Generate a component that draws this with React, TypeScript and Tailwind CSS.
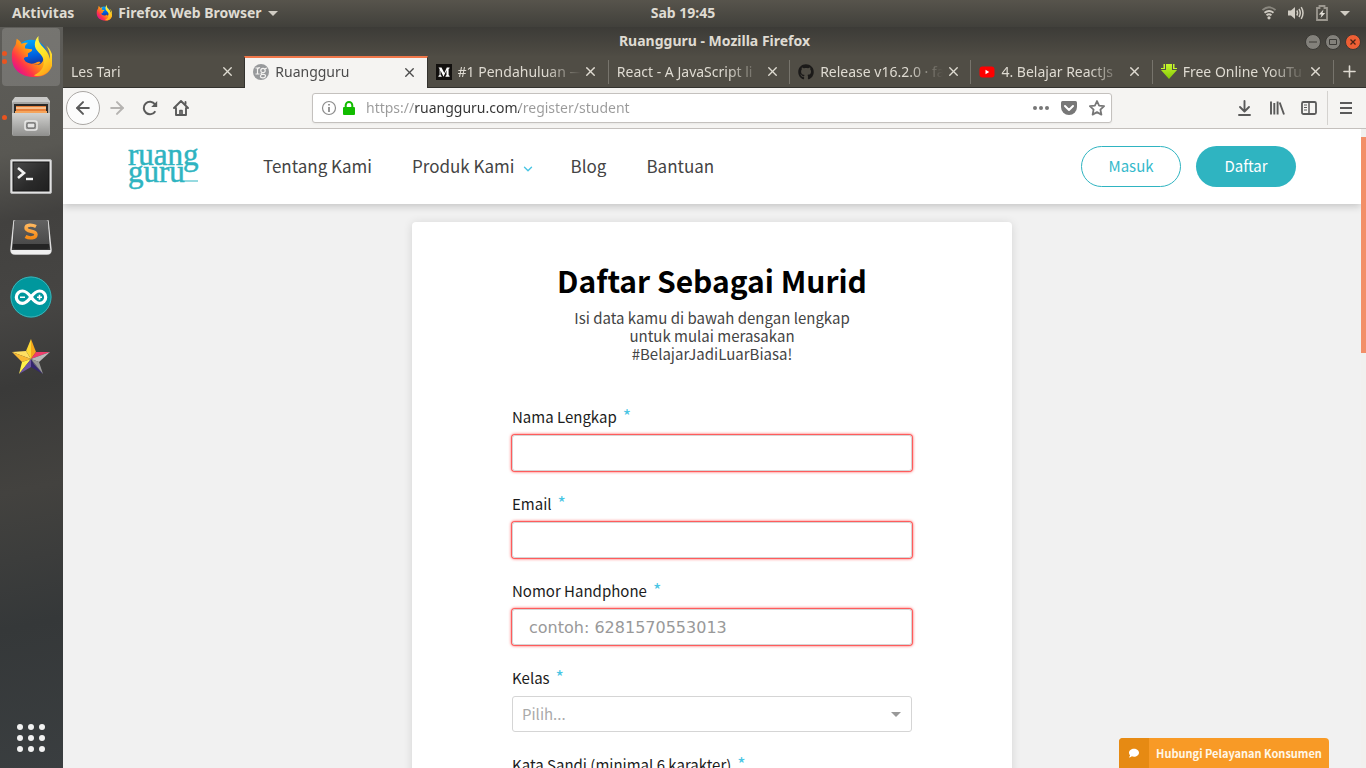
import type { ReactNode } from 'react';
import { ArrowLeft, ArrowRight, ChevronDown, Plus, X } from 'lucide-react';
import { FaComment, FaGithub } from 'react-icons/fa';

const SHELL = "font-['Noto_Sans',sans-serif]";
const SITE = "font-['Noto_Sans_CJK_SC',sans-serif]";

function FirefoxIcon({ id, className }: { id: string; className: string }) {
  return (
    <svg viewBox="0 0 44 44" className={className} aria-hidden="true">
      <defs>
        <linearGradient id={`${id}-body`} x1="0.9" y1="0.1" x2="0.1" y2="0.8">
          <stop offset="0" stopColor="#fff23a" />
          <stop offset="0.3" stopColor="#ffc21a" />
          <stop offset="0.55" stopColor="#ff8a16" />
          <stop offset="0.8" stopColor="#ff3647" />
          <stop offset="1" stopColor="#e31587" />
        </linearGradient>
        <linearGradient id={`${id}-globe`} x1="0.4" y1="0" x2="0.6" y2="1">
          <stop offset="0" stopColor="#00a8fc" />
          <stop offset="0.5" stopColor="#0060df" />
          <stop offset="1" stopColor="#2b1264" />
        </linearGradient>
        <linearGradient id={`${id}-flame`} x1="0.3" y1="0" x2="0.6" y2="1">
          <stop offset="0" stopColor="#fff84a" />
          <stop offset="0.5" stopColor="#ffe226" />
          <stop offset="1" stopColor="#ffa41a" />
        </linearGradient>
      </defs>
      <circle cx="22" cy="21" r="17" fill={`url(#${id}-globe)`} />
      <path
        d="M6 6c2 1 4 3 5 5 2-1 5-1 7-1-3 2-4 4-3 6l7 1c1 2-2 3-4 4-1 1 1 3-1 4-3 0-4 1-3 3 2 4 8 5 12 3 3-2 5-1 5 0-2 2-4 2-7 2 9 2 13-7 8-14 7 1 9 8 7 13 4-7 1-14-2-19 5 4 7 11 7 15 0 12-9 18-18 18C8 46 0 36 1 23 1 17 4 14 5 12z"
        transform="translate(1 -3)"
        fill={`url(#${id}-body)`}
      />
      <path
        d="M30 0c-1 5 1 8 5 12 7 7 10 18 5 25-4 5-11 6-15 4 8-3 13-11 9-19-3-5-8-7-8-13 0-4 2-7 4-9z"
        fill={`url(#${id}-flame)`}
      />
    </svg>
  );
}

function FilesIcon() {
  return (
    <svg viewBox="0 0 40 42" className="h-[42px] w-10" aria-hidden="true">
      <defs>
        <linearGradient id="files-front" x1="0" y1="0" x2="0" y2="1">
          <stop offset="0" stopColor="#d2d2d0" />
          <stop offset="1" stopColor="#8f8f8d" />
        </linearGradient>
      </defs>
      <path d="M4 1h32l3 4v10H1V5z" fill="#c9c9c7" />
      <rect x="1" y="6" width="38" height="34" rx="2" fill="#a5a5a3" />
      <rect x="3" y="8" width="34" height="10" fill="#2b2927" />
      <rect x="5" y="10" width="30" height="6" fill="#e8803a" />
      <path d="M5 12h30" stroke="#f9d4ab" strokeWidth="1.5" />
      <path d="M4 15h32v2H4z" fill="#f5a55c" />
      <path d="M1 17h38l-1 23H2z" fill="url(#files-front)" />
      <rect x="14" y="25" width="12" height="9" rx="2" fill="none" stroke="#e9e9e8" strokeWidth="1.5" />
      <rect x="16" y="27" width="8" height="5" rx="1" fill="#e5e5e4" stroke="#555" />
    </svg>
  );
}

function TerminalIcon() {
  return (
    <svg viewBox="0 0 42 36" className="h-9 w-[42px]" aria-hidden="true">
      <defs>
        <linearGradient id="term-screen" x1="0" y1="0" x2="1" y2="1">
          <stop offset="0" stopColor="#4a4a4a" />
          <stop offset="0.6" stopColor="#2a2a2a" />
          <stop offset="1" stopColor="#202020" />
        </linearGradient>
      </defs>
      <rect x="0.5" y="0.5" width="41" height="34" rx="1.5" fill="#e2e2e2" stroke="#b4b4b4" />
      <rect x="3" y="3" width="36" height="29" fill="url(#term-screen)" stroke="#161616" />
      <path d="m8 9 6 5-6 5" fill="none" stroke="#f2f2f2" strokeWidth="2.6" />
      <path d="M16 20h7" stroke="#f2f2f2" strokeWidth="2.4" />
    </svg>
  );
}

function SublimeIcon() {
  return (
    <svg viewBox="0 0 42 38" className="h-[38px] w-[42px]" aria-hidden="true">
      <defs>
        <linearGradient id="sub-key" x1="0" y1="0" x2="0" y2="1">
          <stop offset="0" stopColor="#626262" />
          <stop offset="1" stopColor="#484848" />
        </linearGradient>
        <linearGradient id="sub-s" x1="0" y1="0" x2="0" y2="1">
          <stop offset="0" stopColor="#ffb65c" />
          <stop offset="1" stopColor="#f58a15" />
        </linearGradient>
      </defs>
      <path d="M4 3h34l3 29q0 4-4 4H5q-4 0-4-4z" fill="#3a3a3a" stroke="#dedede" strokeWidth="1.5" />
      <path d="M1 32h40q0 4-4 4H5q-4 0-4-4z" fill="#f0f0f0" />
      <path d="M6 2h30q2 0 2 2l1 22q0 2-2 2H5q-2 0-2-2L4 4q0-2 2-2z" fill="url(#sub-key)" />
      <path d="M3 26h36v3q0 2-2 2H5q-2 0-2-2z" fill="#242424" />
      <path
        d="M26 8.500c-4-2-10-2-10 1.500 0 4.500 10 2 10 6.500 0 4-7 4-10.500 2"
        fill="none"
        stroke="url(#sub-s)"
        strokeWidth="3.4"
      />
    </svg>
  );
}

function ArduinoIcon() {
  return (
    <svg viewBox="0 0 42 42" className="size-[42px]" aria-hidden="true">
      <circle cx="21" cy="21" r="20.5" fill="#00979d" />
      <circle cx="21" cy="21" r="20" fill="none" stroke="#3fb0b4" />
      <path
        d="M21 21c-3-4-5-6-8.500-6a6.200 6.200 0 0 0 0 12.400c3.500 0 5.500-2.400 8.500-6.400s5-6 8.500-6a6.200 6.200 0 0 1 0 12.400c-3.500 0-5.500-2.400-8.500-6.400z"
        fill="none"
        stroke="#fff"
        strokeWidth="3.2"
      />
      <path d="M10 21.200h5M27 21.200h5M29.500 18.700v5" stroke="#fff" strokeWidth="1.600" />
    </svg>
  );
}

function StarUmlIcon() {
  return (
    <svg viewBox="0 0 38 36" className="h-9 w-[38px]" aria-hidden="true">
      <path d="M19 0v20l-5-8z" fill="#fdd835" />
      <path d="M19 0l5 13-5 7z" fill="#f5a81c" />
      <path d="M0 13l14-1 5 8z" fill="#ffe063" />
      <path d="M0 13l19 7-9 3z" fill="#f9b934" />
      <path d="M38 13l-14 0-5 7z" fill="#ef3d6b" />
      <path d="M38 13L19 20l8 3z" fill="#b9b9b9" />
      <path d="M7 35l3-12 9-3z" fill="#fff04a" />
      <path d="M7 35l12-15v8z" fill="#6d53a3" />
      <path d="M31 35L19 20v8z" fill="#34276e" />
      <path d="M31 35l-4-12-8-3z" fill="#9a9a9a" />
      <path d="M31 35L19 20l3 5z" fill="#777" />
    </svg>
  );
}

function AppsIcon() {
  return (
    <svg viewBox="0 0 28 28" className="size-7" fill="#f2f2f2" aria-hidden="true">
      {[3, 14, 25].map((y) => [3, 14, 25].map((x) => <circle key={`${x}-${y}`} cx={x} cy={y} r="3" />))}
    </svg>
  );
}

function SystemBar() {
  return (
    <header className="grid h-[27px] shrink-0 grid-cols-[1fr_auto_1fr] items-center bg-gradient-to-b from-[#57544c] to-[#41403b] px-3 pb-px text-sm font-bold text-[#dfdbd2]">
      <div className="flex items-center gap-[22px]">
        <button type="button">Aktivitas</button>
        <button type="button" className="flex items-center gap-1.5">
          <FirefoxIcon id="fx-small" className="size-4" />
          Firefox Web Browser
          <svg viewBox="0 0 10 5" className="h-[5px] w-2.5" fill="#d0ccc3" aria-hidden="true">
            <path d="M0 0h10L5 5z" />
          </svg>
        </button>
      </div>
      <time>Sab 19:45</time>
      <div className="flex items-center justify-end gap-3 pr-1">
        <svg viewBox="0 0 14 14" className="size-3.5" fill="none" stroke="#d0ccc3" strokeWidth="1.800" aria-hidden="true">
          <path d="M.5 4Q7-1.500 13.500 4" stroke="#8a877f" />
          <path d="M2.500 6.700q4.500-3.500 9 0M4.500 9.300q2.500-2 5 0" />
          <circle cx="7" cy="11.800" r="1.600" fill="#d0ccc3" stroke="none" />
        </svg>
        <svg viewBox="0 0 16 14" className="h-3.5 w-4" fill="none" stroke="#d0ccc3" strokeWidth="1.500" aria-hidden="true">
          <path d="M0 4.500h3L7 1v12L3 9.500H0z" fill="#d0ccc3" stroke="none" />
          <path d="M8.800 4.500q1.500 2.500 0 5M11 3q2.500 4 0 8M13.200 1.200q3.600 5.800 0 11.600" />
        </svg>
        <svg viewBox="0 0 12 16" className="h-4 w-3" aria-hidden="true">
          <path d="M1 3h2.500V1h5v2H11v12H1z" fill="none" stroke="#9b978f" strokeWidth="1.800" />
          <path d="M7.500 4.500 2.800 9.500h2.700L4.500 13l4.700-5H6.500z" fill="#e3e0d8" />
        </svg>
        <svg viewBox="0 0 10 5" className="h-[5px] w-2.5" fill="#d0ccc3" aria-hidden="true">
          <path d="M0 0h10L5 5z" />
        </svg>
      </div>
    </header>
  );
}

function DockItem({ label, dots = 0, active = false, children }: { label: string; dots?: number; active?: boolean; children: ReactNode }) {
  return (
    <li className="relative flex h-[58px] w-full items-center justify-center">
      <button
        type="button"
        aria-label={label}
        className={active ? 'flex h-[58px] w-[58px] items-center justify-center rounded bg-white/15' : 'flex h-[58px] w-[58px] items-center justify-center'}
      >
        {children}
      </button>
      <span className="absolute left-0.5 flex flex-col gap-[3px]">
        {Array.from({ length: dots }, (_, i) => (
          <i key={i} className="size-[5px] rounded-full bg-[#e95420]" />
        ))}
      </span>
    </li>
  );
}

function Dock() {
  return (
    <nav
      aria-label="Dock"
      className="flex w-[63px] shrink-0 flex-col justify-between bg-[linear-gradient(168deg,#5e5d59_0%,#595853_17%,#42413f_26%,#464543_38%,#3a3a39_48%,#43423f_62%,#353839_80%,#3a3e40_100%)] pt-px pr-px pb-[2px]"
    >
      <ul className="flex flex-col gap-0.5">
        <DockItem label="Firefox" dots={2} active>
          <FirefoxIcon id="fx-dock" className="size-[42px]" />
        </DockItem>
        <DockItem label="Files" dots={1}>
          <FilesIcon />
        </DockItem>
        <DockItem label="Terminal">
          <TerminalIcon />
        </DockItem>
        <DockItem label="Sublime Text">
          <SublimeIcon />
        </DockItem>
        <DockItem label="Arduino">
          <ArduinoIcon />
        </DockItem>
        <DockItem label="StarUML">
          <StarUmlIcon />
        </DockItem>
      </ul>
      <button type="button" aria-label="Show applications" className="flex h-14 items-center justify-center">
        <AppsIcon />
      </button>
    </nav>
  );
}

function TitleBar() {
  return (
    <div className="grid h-[29px] shrink-0 grid-cols-[1fr_auto_1fr] items-center bg-gradient-to-b from-[#3c3b37] to-[#4f4c44] px-[5px] text-sm font-bold text-[#dfdbd2]">
      <span />
      <h1 className="pb-0.5">Ruangguru - Mozilla Firefox</h1>
      <div className="flex justify-end gap-1">
        <button type="button" aria-label="Minimize" className="flex size-4 items-center justify-center rounded-full border border-[#3a3935] bg-[#83817b]">
          <svg viewBox="0 0 8 8" className="size-2" stroke="#3c3b37" aria-hidden="true"><path d="M0 4h8" /></svg>
        </button>
        <button type="button" aria-label="Maximize" className="flex size-4 items-center justify-center rounded-full border border-[#3a3935] bg-[#83817b]">
          <svg viewBox="0 0 8 8" className="size-2" fill="none" stroke="#3c3b37" aria-hidden="true"><path d="M.5 1.500h7v5h-7z" /></svg>
        </button>
        <button type="button" aria-label="Close" className="flex size-4 items-center justify-center rounded-full border border-[#3a3935] bg-[#ee5f34]">
          <svg viewBox="0 0 8 8" className="size-2" stroke="#4a2416" strokeWidth="1.300" aria-hidden="true"><path d="m1.500 1.500 5 5m0-5-5 5" /></svg>
        </button>
      </div>
    </div>
  );
}

function RuangguruFavicon() {
  return (
    <svg viewBox="0 0 16 16" className="size-4 shrink-0" aria-hidden="true">
      <circle cx="8" cy="8" r="8" fill="#97999b" />
      <g fill="none" stroke="#f4f3f1" strokeWidth="1.200">
        <path d="M2.500 4h2v6M2.500 10h4M4.500 5.500Q5.500 3 7 4" />
        <circle cx="10" cy="6.500" r="2.200" />
        <path d="M12 4.800l2-.8M8.500 8.800c-1 1 0 1.500 2 1.500 3 0 2.500 3.500-.5 3.500-3.500 0-3-2.500-1-3.500" />
      </g>
    </svg>
  );
}

function MediumIcon() {
  return (
    <svg viewBox="0 0 16 16" className="size-4 shrink-0" aria-hidden="true">
      <path d="M0 0h16v16H0z" fill="#12100e" />
      <path d="M2.500 3.500h3L8.300 9l2.500-5.500h2.800v.8l-1 .8v6l1 .8v.9H9.500v-.9l1-.8V6.300l-3 6.400L4.500 6.500v4.600l1.200.9v.8H2.400V12l1.200-.9V5z" fill="#fff" />
    </svg>
  );
}

function YoutubeIcon() {
  return (
    <svg viewBox="0 0 16 16" className="size-4 shrink-0" aria-hidden="true">
      <rect x="0.500" y="2.500" width="15" height="11" rx="3" fill="#f00" />
      <path d="M6.500 5.800v4.400L10.200 8z" fill="#fff" />
    </svg>
  );
}

function DownloadFavicon() {
  return (
    <svg viewBox="0 0 16 16" className="size-4 shrink-0" aria-hidden="true">
      <defs>
        <linearGradient id="dl" x1="0" y1="0" x2="0" y2="1">
          <stop offset="0" stopColor="#c6f52c" />
          <stop offset="1" stopColor="#83c807" />
        </linearGradient>
      </defs>
      <path d="M5 0h6v6h5l-8 9L0 6h5z" fill="url(#dl)" />
      <path d="M2.500 0h1.500v5H0V4h2.500zM13.500 0H12v5h4V4h-2.500z" fill="#c6f52c" />
    </svg>
  );
}

type TabData = { title: string; icon?: ReactNode; active?: boolean; divider?: boolean };

const TABS: TabData[] = [
  { title: 'Les Tari' },
  { title: 'Ruangguru', icon: <RuangguruFavicon />, active: true },
  { title: '#1 Pendahuluan —', icon: <MediumIcon />, divider: true },
  { title: 'React - A JavaScript li', divider: true },
  { title: 'Release v16.2.0 · fa', icon: <FaGithub className="size-4 shrink-0 text-[#1b1a19]" />, divider: true },
  { title: '4. Belajar ReactJs', icon: <YoutubeIcon />, divider: true },
  { title: 'Free Online YouTu', icon: <DownloadFavicon />, divider: true },
];

function BrowserTab({ title, icon, active, divider }: TabData) {
  return (
    <div
      className={
        active
          ? 'flex min-w-0 flex-1 items-center border-x border-t-2 border-x-[#33322e] border-t-[#f0774a] bg-[#f5f4f2] pb-0.5 text-[#4c4c4c]'
          : 'flex min-w-0 flex-1 items-center border-b border-[#33322e] text-[#dfdbd2]'
      }
    >
      <button
        type="button"
        role="tab"
        aria-selected={!!active}
        className="flex min-w-0 flex-1 items-center gap-1.5 pl-2 text-left text-sm leading-6"
      >
        {icon}
        <span className="min-w-0 flex-1 overflow-hidden whitespace-nowrap [mask-image:linear-gradient(to_right,#000_calc(100%-36px),transparent)]">
          {title}
        </span>
      </button>
      <button type="button" aria-label={`Close ${title}`} className="mr-[7px] flex size-5 shrink-0 items-center justify-center">
        <X size={15} strokeWidth={2.2} />
      </button>
      <span className={divider ? 'h-6 w-px bg-[#77746c]' : 'h-6'} />
    </div>
  );
}

function TabStrip() {
  return (
    <div role="tablist" className="flex h-8 shrink-0 bg-[#504d45]">
      {TABS.map((tab) => (
        <BrowserTab key={tab.title} {...tab} />
      ))}
      <button type="button" aria-label="New tab" className="flex w-8 shrink-0 items-center justify-center border-b border-[#33322e] text-[#dfdbd2]">
        <Plus size={19} strokeWidth={2} />
      </button>
    </div>
  );
}

function Toolbar() {
  return (
    <div className="flex h-[41px] shrink-0 items-center border-b border-[#c4c0bd] bg-[#f5f4f2] text-[#5a5a5a]">
      <div className="flex w-[249px] shrink-0 items-center gap-[15px] pl-[3px]">
        <button type="button" aria-label="Back" className="-mr-2 flex size-[34px] items-center justify-center rounded-full border border-[#aaa7a4] bg-[#fcfcfc]">
          <ArrowLeft size={20} strokeWidth={2.4} />
        </button>
        <button type="button" aria-label="Forward" disabled className="text-[#b5b3b1]">
          <ArrowRight size={20} strokeWidth={2.4} />
        </button>
        <button type="button" aria-label="Reload">
          <svg viewBox="0 0 16 16" className="size-4" fill="none" stroke="currentColor" strokeWidth="2" aria-hidden="true">
            <path d="M13.300 11.200A6.200 6.200 0 1 1 13 4.400" />
            <path d="M15.200 1v6H9.200z" fill="currentColor" stroke="none" />
          </svg>
        </button>
        <button type="button" aria-label="Home">
          <svg viewBox="0 0 16 16" className="size-4" fill="none" stroke="currentColor" strokeWidth="1.900" strokeLinejoin="round" strokeLinecap="round" aria-hidden="true">
            <path d="M1 8l7-7 7 7M3 8v7h10V8" />
            <path d="M7 15v-4.500h2V15" strokeWidth="1.700" />
            <path d="M12.500 2v2" />
          </svg>
        </button>
      </div>
      <div className="flex h-[30px] min-w-0 flex-1 items-center gap-1.5 rounded-[3px] border border-[#c4c1be] bg-white px-2 shadow-xs">
        <svg viewBox="0 0 16 16" className="size-4 shrink-0" fill="none" stroke="#8c8c8c" aria-hidden="true">
          <circle cx="8" cy="8" r="6.500" strokeWidth="1.200" />
          <path d="M8 7v5M8 4v1.600" strokeWidth="1.800" />
        </svg>
        <svg viewBox="0 0 12 14" className="h-3.5 w-3 shrink-0" aria-hidden="true">
          <rect x="0" y="6" width="12" height="8" rx="1" fill="#12bc00" />
          <path d="M2.700 7V4.300a3.300 3.300 0 0 1 6.600 0V7" fill="none" stroke="#12bc00" strokeWidth="2" />
        </svg>
        <input
          aria-label="Address"
          defaultValue="https://ruangguru.com/register/student"
          className="ml-[5px] min-w-0 flex-1 bg-[linear-gradient(to_right,#9a9a9a_49px,#333_49px,#333_153px,#9a9a9a_153px)] bg-clip-text text-sm text-transparent outline-none"
        />
        <div className="flex shrink-0 items-center gap-3 pr-0.5 text-[#777]">
          <button type="button" aria-label="Page actions">
            <svg viewBox="0 0 16 4" className="h-1 w-4" fill="currentColor" aria-hidden="true">
              <circle cx="2" cy="2" r="2" /><circle cx="8" cy="2" r="2" /><circle cx="14" cy="2" r="2" />
            </svg>
          </button>
          <button type="button" aria-label="Save to Pocket">
            <svg viewBox="0 0 16 14" className="h-3.5 w-4" aria-hidden="true">
              <path d="M1.500 0h13Q16 0 16 1.500V6a8 8 0 0 1-16 0V1.500Q0 0 1.500 0z" fill="currentColor" />
              <path d="m4 5 4 4 4-4" fill="none" stroke="#fff" strokeWidth="2" strokeLinecap="round" strokeLinejoin="round" />
            </svg>
          </button>
          <button type="button" aria-label="Bookmark" className="-mr-1">
            <svg viewBox="0 0 16 16" className="size-4" fill="none" stroke="currentColor" strokeWidth="1.800" strokeLinejoin="round" aria-hidden="true">
              <path d="m8 1 2.100 4.600 5 .6-3.700 3.400 1 5L8 12.100l-4.400 2.500 1-5L.9 6.200l5-.6z" />
            </svg>
          </button>
        </div>
      </div>
      <div className="flex w-[254px] shrink-0 items-center justify-end gap-4 pr-3">
        <button type="button" aria-label="Downloads">
          <svg viewBox="0 0 16 16" className="size-4" fill="none" stroke="currentColor" strokeWidth="1.900" strokeLinecap="round" strokeLinejoin="round" aria-hidden="true">
            <path d="M7.500 1v10M3 7l4.500 4.500L12 7M2 15h11" />
          </svg>
        </button>
        <button type="button" aria-label="Library">
          <svg viewBox="0 0 16 16" className="size-4" fill="none" stroke="currentColor" strokeWidth="1.900" aria-hidden="true">
            <path d="M2 1.500v13M5.300 3v11.500M8.600 1.500v13M10.700 2.500l4.300 12" />
          </svg>
        </button>
        <button type="button" aria-label="Sidebars">
          <svg viewBox="0 0 16 16" className="size-4" fill="none" stroke="currentColor" strokeWidth="1.800" aria-hidden="true">
            <rect x="1" y="2" width="14" height="12" rx="1.500" />
            <path d="M8 2v12" strokeWidth="1.500" />
            <path d="M3 5h3M3 7.500h3M3 10h3" strokeWidth="1" />
          </svg>
        </button>
        <span className="-mx-1.5 h-[34px] w-px bg-[#d4d2cf]" />
        <button type="button" aria-label="Menu">
          <svg viewBox="0 0 16 16" className="size-4" stroke="currentColor" strokeWidth="2" aria-hidden="true">
            <path d="M2 3h12M2 8h12M2 13h12" />
          </svg>
        </button>
      </div>
    </div>
  );
}

function Logo() {
  return (
    <a href="#home" aria-label="ruangguru">
      <svg viewBox="0 0 72 46" className="h-[46px] w-[72px]" fill="#2fb4c1" aria-hidden="true">
        <g className="font-['Liberation_Serif',serif]" fontSize="31" stroke="#2fb4c1" strokeWidth="0.500">
          <text x="0" y="21">ruang</text>
          <text x="0" y="38">guru</text>
        </g>
        <path d="M53 36.500h17v1H53z" />
      </svg>
    </a>
  );
}

function SiteHeader() {
  return (
    <header className="relative flex h-[75px] shrink-0 items-center bg-white px-[65px] shadow-[0_2px_8px_rgba(0,0,0,0.2)]">
      <div className="w-[135px] shrink-0">
        <Logo />
      </div>
      <nav className="flex flex-1 items-center gap-10 pb-0.5 text-[17px] leading-6 text-[#444]">
        <a href="#tentang">Tentang Kami</a>
        <a href="#produk" className="flex items-center gap-1.5">
          Produk Kami
          <ChevronDown size={14} strokeWidth={2.4} className="mt-1.5 -mr-1 text-[#48c5e4]" />
        </a>
        <a href="#blog">Blog</a>
        <a href="#bantuan">Bantuan</a>
      </nav>
      <div className="flex gap-[15px] text-[15px]">
        <button type="button" className="h-[41px] w-[100px] rounded-full border border-[#2fb4c1] text-[#35b9cb]">Masuk</button>
        <button type="button" className="h-[41px] w-[100px] rounded-full bg-[#2fb4c1] text-white">Daftar</button>
      </div>
    </header>
  );
}

function FieldLabel({ htmlFor, children }: { htmlFor: string; children: ReactNode }) {
  return (
    <label htmlFor={htmlFor} className="flex gap-1.5 text-[15px] leading-[22px] text-[#1c1c1c]">
      {children}
      <span aria-hidden="true" className="-mt-0.5 text-lg leading-[22px] text-[#48c5e4]">*</span>
    </label>
  );
}

function TextField({ id, label, type, placeholder }: { id: string; label: string; type: string; placeholder?: string }) {
  return (
    <div className="flex flex-col gap-[7px]">
      <FieldLabel htmlFor={id}>{label}</FieldLabel>
      <input
        id={id}
        type={type}
        placeholder={placeholder}
        className="h-9 w-full rounded-[3px] border border-[#d5d5d5] px-4 font-['DejaVu_Sans',sans-serif] text-base shadow-[0_0_0_1px_#ff5c5c,0_0_3px_1px_#ff5c5c] outline-none placeholder:text-[#999]"
      />
    </div>
  );
}

function RegisterForm() {
  return (
    <form className="mx-auto mt-[18px] w-full max-w-[600px] shrink-0 rounded bg-white px-[100px] pt-[35px] pb-12 shadow-[0_1px_10px_rgba(0,0,0,0.12)]">
      <h2 className="text-center text-[30px] leading-[46px] font-bold text-black">Daftar Sebagai Murid</h2>
      <p className="mt-1.5 text-center text-[15px] leading-[18px] text-[#444]">
        Isi data kamu di bawah dengan lengkap
        <br />
        untuk mulai merasakan
        <br />
        #BelajarJadiLuarBiasa!
      </p>
      <div className="mt-[43px] flex flex-col gap-[22px]">
        <TextField id="nama" label="Nama Lengkap" type="text" />
        <TextField id="email" label="Email" type="email" />
        <TextField id="handphone" label="Nomor Handphone" type="tel" placeholder="contoh: 6281570553013" />
        <div className="flex flex-col gap-[7px]">
          <FieldLabel htmlFor="kelas">Kelas</FieldLabel>
          <div className="relative">
            <select id="kelas" className="h-9 w-full appearance-none rounded-[3px] border border-[#d5d5d5] bg-white px-[9px] text-[15px] text-[#aaa] outline-none">
              <option>Pilih...</option>
            </select>
            <svg viewBox="0 0 10 5" className="pointer-events-none absolute top-4 right-[11px] h-[5px] w-2.5" fill="#999" aria-hidden="true">
              <path d="M0 0h10L5 5z" />
            </svg>
          </div>
        </div>
        <TextField id="sandi" label="Kata Sandi (minimal 6 karakter)" type="password" />
      </div>
    </form>
  );
}

export default function App() {
  return (
    <div className={`flex h-screen flex-col overflow-hidden ${SHELL}`}>
      <SystemBar />
      <div className="flex min-h-0 flex-1">
        <Dock />
        <section className="flex min-w-0 flex-1 flex-col">
          <TitleBar />
          <TabStrip />
          <Toolbar />
          <div className="flex min-h-0 flex-1">
            <main className={`relative flex min-w-0 flex-1 flex-col overflow-hidden bg-[#f1f1f1] ${SITE}`}>
              <SiteHeader />
              <RegisterForm />
              <button type="button" className="absolute right-8 bottom-0 flex h-[30px] items-center overflow-hidden rounded-t bg-[#f89a26] text-[11px] font-bold text-[#fff7e8]">
                <span className="flex h-full w-[30px] items-center justify-center bg-[#e68a13]">
                  <FaComment className="size-2.5 text-white" />
                </span>
                <span className="w-[180px]">Hubungi Pelayanan Konsumen</span>
              </button>
            </main>
            <div className="w-[5px] bg-[#f1f0ee] pt-2">
              <div className="h-[216px] bg-[#f28f68]" />
            </div>
          </div>
        </section>
      </div>
    </div>
  );
}
